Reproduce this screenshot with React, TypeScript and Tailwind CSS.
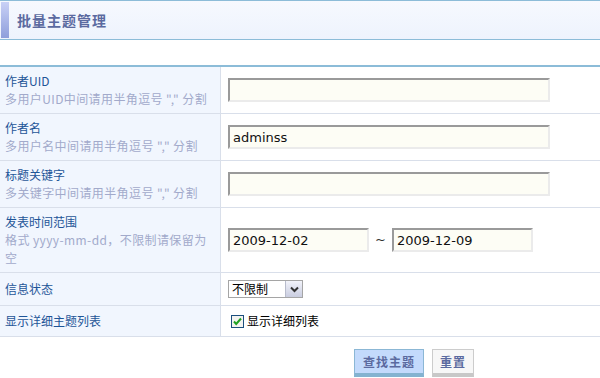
import React from "react";

const cjk = '"Noto Sans CJK SC", "Noto Sans", sans-serif';
const latin = '"DejaVu Sans", "Noto Sans CJK SC", sans-serif';

function Row({
  h,
  title,
  sub,
  children,
}: {
  h: string;
  title: string;
  sub?: React.ReactNode;
  children: React.ReactNode;
}) {
  return (
    <div className={`flex border-b border-[#d9dfea] ${h}`}>
      <div className="w-[221px] shrink-0 bg-[#f1f6fe] border-r border-[#d9dfea] pl-[5px] pr-[2px] flex flex-col justify-center text-[12px] leading-[18px]">
        <div className="text-[#1e5598]">{title}</div>
        {sub && <div className="text-[#a2aacb] tracking-[0.4px]">{sub}</div>}
      </div>
      <div className="flex-1 pl-[7px] flex items-center">{children}</div>
    </div>
  );
}

function TextInput({ w, value }: { w: string; value?: string }) {
  return (
    <input
      readOnly
      value={value ?? ""}
      className={`${w} h-[24px] border-2 border-t-[#9a9a9a] border-l-[#9a9a9a] border-r-[#ebebeb] border-b-[#ebebeb] bg-[#fdfdf5] pl-[3px] text-[13px] text-[#111] outline-none`}
      style={{ fontFamily: latin }}
    />
  );
}

export default function App() {
  return (
    <div
      className="w-[600px] h-[378px] bg-white overflow-hidden"
      style={{ fontFamily: cjk }}
    >
      <div className="h-[40px] border-y border-[#8cbcd8] bg-gradient-to-b from-[#f6f9fe] to-[#eef3fd] flex items-center">
        <div className="ml-[1px] w-[8px] h-[36px] bg-gradient-to-b from-[#c9d1f6] to-[#8e9edb]" />
        <h1 className="ml-[8px] text-[14px] font-bold tracking-[1px] text-[#5b6aa0] leading-[20px]">
          批量主题管理
        </h1>
      </div>

      <div className="mt-[25px] border-t-2 border-[#8cbcd8]">
        <Row h="h-[47px]" title="作者UID" sub={'多用户UID中间请用半角逗号 "," 分割'}>
          <TextInput w="w-[322px]" />
        </Row>
        <Row h="h-[47px]" title="作者名" sub={'多用户名中间请用半角逗号 "," 分割'}>
          <TextInput w="w-[322px]" value="adminss" />
        </Row>
        <Row h="h-[47px]" title="标题关键字" sub={'多关键字中间请用半角逗号 "," 分割'}>
          <TextInput w="w-[322px]" />
        </Row>
        <Row
          h="h-[65px]"
          title="发表时间范围"
          sub={
            <>
              格式 yyyy-mm-dd，不限制请保留为
              <br />空
            </>
          }
        >
          <TextInput w="w-[141px]" value="2009-12-02" />
          <span className="w-[23px] text-center text-[13px] text-[#333]" style={{ fontFamily: latin }}>
            ~
          </span>
          <TextInput w="w-[141px]" value="2009-12-09" />
        </Row>
        <Row h="h-[33px]" title="信息状态">
          <div className="w-[75px] h-[18px] border border-[#a5a5a5] flex items-stretch bg-white">
            <div className="flex-1 pl-[3px] text-[12px] leading-[16px] text-black">不限制</div>
            <div className="w-[17px] border-l border-[#b8bccc] bg-gradient-to-b from-[#f2f3fa] to-[#c9cde0] flex items-center justify-center">
              <svg width="9" height="7" viewBox="0 0 9 7">
                <path d="M1 1.5 L4.5 5 L8 1.5" stroke="#333" strokeWidth="2" fill="none" />
              </svg>
            </div>
          </div>
        </Row>
        <Row h="h-[31px]" title="显示详细主题列表">
          <svg width="13" height="13" viewBox="0 0 13 13" className="ml-[3px]">
            <rect x="0.5" y="0.5" width="12" height="12" fill="#f4f4f0" stroke="#1c4f7e" />
            <path d="M3 6.5 L5.2 9 L10 3.5" stroke="#21a121" strokeWidth="2" fill="none" />
          </svg>
          <span className="ml-[3px] text-[12px] text-black leading-[18px]">显示详细列表</span>
        </Row>
      </div>

      <div className="mt-[12px] flex">
        <div className="w-[221px]" />
        <div className="flex-1 pl-[7px] flex justify-center gap-[8px]">
          <button className="w-[70px] h-[28px] bg-[#c3dafc] border border-[#8bb7d5] border-b-4 border-b-[#84b3d1] text-[12px] font-bold tracking-[1px] text-[#5b6aa0] leading-[16px]">
            查找主题
          </button>
          <button className="w-[42px] h-[28px] bg-[#f7f7f7] border border-[#cccccc] border-b-4 border-b-[#c8c8c8] text-[12px] font-bold tracking-[1px] text-[#5b6aa0] leading-[16px]">
            重置
          </button>
        </div>
      </div>
    </div>
  );
}
